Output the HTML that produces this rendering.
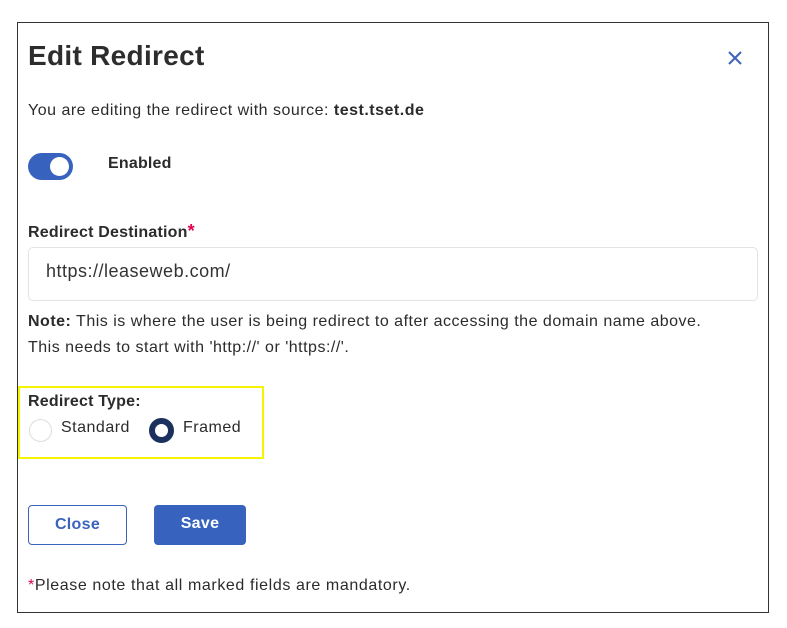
<!DOCTYPE html>
<html><head><meta charset="utf-8"><style>
*{margin:0;padding:0;box-sizing:border-box}
body{width:787px;height:628px;background:#fff;font-family:"Liberation Sans",sans-serif;color:#2b2b2b;position:relative;overflow:hidden}
.dlg{position:absolute;left:17px;top:22px;width:752px;height:591px;border:1px solid #333}
.a{position:absolute;white-space:nowrap}
h1{position:absolute;left:28px;top:40px;font-size:28px;font-weight:bold;color:#2d2d2d;letter-spacing:0.3px}
.t{font-size:16px;letter-spacing:0.5px}
.b{font-weight:bold;letter-spacing:0.2px}
.star{color:#e4004f}
.input{position:absolute;left:28px;top:247px;width:730px;height:54px;border:1px solid #e3e3e3;border-radius:5px;font-size:18px;padding:13px 0 0 17px;color:#333;letter-spacing:0.5px}
.yel{position:absolute;left:18px;top:386px;width:246px;height:73px;border:2px solid #f5f500}
.btn{position:absolute;top:505px;height:40px;border-radius:4px;font-size:16px;font-weight:bold;text-align:center;line-height:38px;letter-spacing:0.3px}
</style></head><body>
<div class="dlg"></div>
<h1>Edit Redirect</h1>
<svg class="a" style="left:727px;top:50px" width="16" height="16" viewBox="0 0 16 16"><path d="M2 2L14 14M14 2L2 14" stroke="#3a63b9" stroke-width="2"/></svg>
<div class="a t" style="left:28px;top:102px">You are editing the redirect with source: <b>test.tset.de</b></div>
<div class="a" style="left:28px;top:153px;width:45px;height:27px;border-radius:14px;background:#3763bf"></div>
<div class="a" style="left:50px;top:157px;width:19px;height:19px;border-radius:50%;background:#fff"></div>
<div class="a t b" style="left:108px;top:155px">Enabled</div>
<div class="a t b" style="left:28px;top:221px">Redirect Destination<span class="star" style="font-size:18px">*</span></div>
<div class="input">https://leaseweb.com/</div>
<div class="a t" style="left:28px;top:313px"><b>Note:</b> This is where the user is being redirect to after accessing the domain name above.</div>
<div class="a t" style="left:28px;top:339px">This needs to start with 'http://' or 'https://'.</div>
<div class="yel"></div>
<div class="a t b" style="left:28px;top:393px">Redirect Type:</div>
<div class="a" style="left:29px;top:419px;width:23px;height:23px;border-radius:50%;border:1.5px solid #ddd"></div>
<div class="a t" style="left:61px;top:419px;font-size:16px">Standard</div>
<div class="a" style="left:149px;top:418px;width:25px;height:25px;border-radius:50%;border:6px solid #1c305e"></div>
<div class="a t" style="left:183px;top:419px;font-size:16px">Framed</div>
<div class="btn" style="left:28px;width:99px;border:1px solid #3a63b9;color:#3a63b9">Close</div>
<div class="btn" style="left:154px;width:92px;background:#3763bf;color:#fff">Save</div>
<div class="a t" style="left:28px;top:577px;font-size:16px;letter-spacing:0.6px"><span class="star">*</span>Please note that all marked fields are mandatory.</div>
</body></html>
